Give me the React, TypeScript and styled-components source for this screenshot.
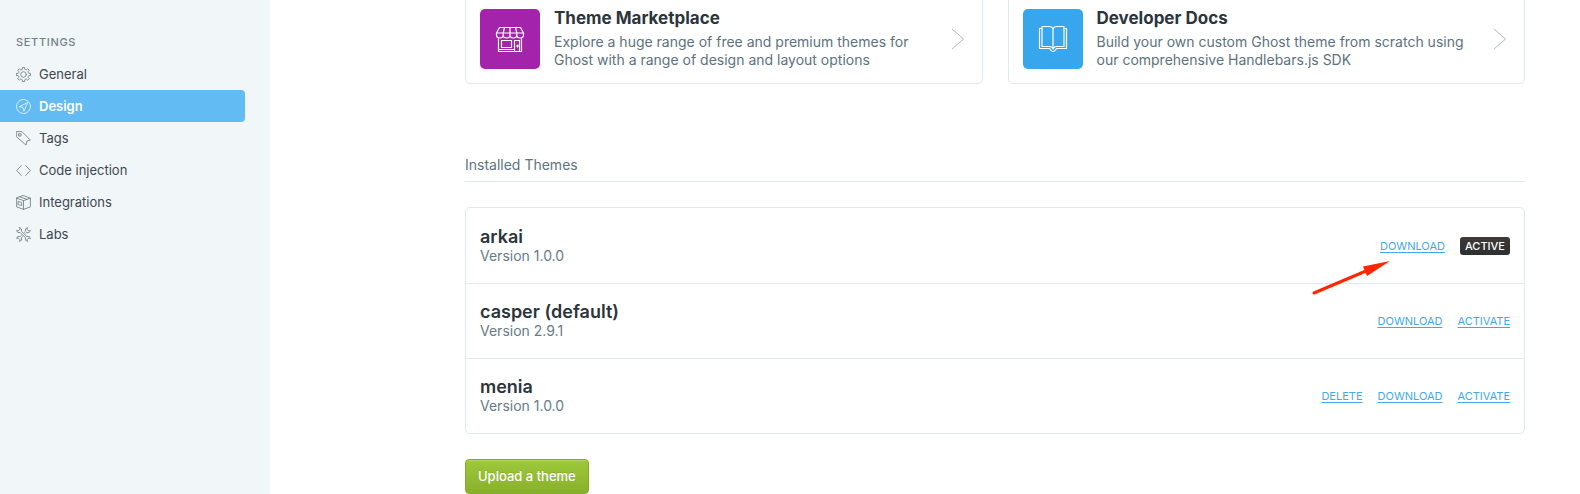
import React from "react";
import styled, { createGlobalStyle, css } from "styled-components";

const GlobalStyle = createGlobalStyle`
  * { box-sizing: border-box; }
  html, body { margin: 0; background: #fff; overflow: hidden; }
  body {
    font-family: Inter, "Liberation Sans", sans-serif;
    font-size: 14px;
    color: #15212a;
    -webkit-font-smoothing: antialiased;
  }
  h1, h2, h3, p, ul { margin: 0; padding: 0; }
  ul { list-style: none; }
`;

const Page = styled.div`
  display: grid;
  grid-template-columns: 270px minmax(0, 1fr);
  height: 100vh;
  overflow: hidden;
`;

const Sidebar = styled.nav`
  padding-top: 34px;
  background: #f1f6f9;
`;

const NavLink = styled.a<{ $active?: boolean }>`
  display: flex;
  align-items: center;
  gap: 8px;
  height: 32px;
  margin-right: 25px;
  padding-left: 16px;
  border-radius: 0 4px 4px 0;
  font-size: 13px;
  line-height: 16px;
  color: #3e484f;
  text-decoration: none;
  svg { color: #757f84; }
  ${(p) =>
    p.$active &&
    css`
      background: #63bbf3;
      color: #fff;
      font-weight: 600;
      svg { color: #e6f5ff; }
    `}
`;

const NavHeading = styled.h2`
  margin-bottom: 8px;
  padding-left: 16px;
  font-size: 11px;
  line-height: 16px;
  font-weight: 500;
  letter-spacing: 0.06em;
  text-transform: uppercase;
  color: #738088;
`;

const NavIcon = styled.svg`
  flex: none;
  width: 15px;
  height: 15px;
  fill: none;
  stroke: currentColor;
  stroke-width: 1.4;
  stroke-linejoin: round;
  stroke-linecap: round;
`;

const Main = styled.main`
  padding: 0 55px 0 195px;
  margin-top: -6px;
`;

const Cards = styled.section`
  display: grid;
  grid-template-columns: 1fr 1fr;
  gap: 25px;
`;

const Card = styled.a`
  display: flex;
  align-items: center;
  padding: 14px;
  border: 1px solid #dfe9f0;
  border-radius: 5px;
  text-decoration: none;
`;

const Tile = styled.span<{ $color: string }>`
  display: flex;
  flex: none;
  align-items: center;
  justify-content: center;
  width: 60px;
  height: 60px;
  border-radius: 5px;
  background: ${(p) => p.$color};
`;

const TileIcon = styled.svg`
  width: 30px;
  height: 30px;
  fill: none;
  stroke: #fff;
  stroke-width: 1.2;
  stroke-linejoin: round;
  stroke-linecap: round;
`;

const CardText = styled.div`
  flex: 1;
  margin-left: 14px;
`;

const CardTitle = styled.h3`
  margin-bottom: 6px;
  font-size: 17px;
  line-height: 18px;
  font-weight: 700;
  color: #2b353b;
`;

const CardCopy = styled.p`
  max-width: 380px;
  font-size: 14px;
  line-height: 18px;
  color: #5d727e;
`;

const Chevron = styled.svg`
  flex: none;
  width: 14px;
  height: 22px;
  margin-right: 3px;
  fill: none;
  stroke: #b0bac0;
`;

const SectionTitle = styled.h2`
  margin: 71px 0 25px;
  padding-bottom: 7px;
  border-bottom: 1px solid #dfe9f0;
  font-size: 14px;
  line-height: 19px;
  font-weight: 400;
  color: #5d7480;
`;

const ThemeList = styled.ul`
  border: 1px solid #dfe9f0;
  border-radius: 5px;
`;

const ThemeRow = styled.li`
  display: flex;
  align-items: center;
  justify-content: space-between;
  height: 75px;
  padding: 0 14px;
  & + & { border-top: 1px solid #dfe9f0; }
`;

const ThemeName = styled.h3`
  font-size: 18px;
  line-height: 20px;
  font-weight: 600;
  color: #2b353b;
`;

const ThemeVersion = styled.p`
  font-size: 14px;
  line-height: 18px;
  color: #667c87;
`;

const Actions = styled.div`
  display: flex;
  align-items: center;
  gap: 15px;
`;

const ActionLink = styled.a`
  font-size: 11px;
  line-height: 18px;
  text-transform: uppercase;
  text-decoration: underline;
  text-underline-offset: 2px;
  color: #3fa9ea;
`;

const ActiveBadge = styled.span`
  padding: 0 5px;
  border-radius: 3px;
  background: linear-gradient(#3f3a38, #2d2f31);
  font-size: 11px;
  line-height: 18px;
  font-weight: 500;
  text-transform: uppercase;
  color: #fff;
`;

const UploadButton = styled.button`
  display: block;
  height: 35px;
  margin-top: 25px;
  padding: 0 12px 2px;
  border: 1px solid #86ab2c;
  border-radius: 4px;
  background: linear-gradient(#9fc93a, #88b02b);
  box-shadow: inset 0 1px 0 rgba(255, 255, 255, 0.2);
  font-family: inherit;
  font-size: 13px;
  font-weight: 500;
  color: #fff;
  text-shadow: 0 -1px 0 rgba(0, 0, 0, 0.1);
`;

const Pointer = styled.svg`
  position: absolute;
  top: 260px;
  right: 190px;
  width: 78px;
  height: 36px;
  pointer-events: none;
`;

const gearPath = Array.from({ length: 8 }, (_, i) => {
  const at = (deg: number, r: number) => {
    const a = ((i * 45 + deg) * Math.PI) / 180;
    return `${(12 + r * Math.sin(a)).toFixed(2)} ${(12 - r * Math.cos(a)).toFixed(2)}`;
  };
  return `${i ? "L" : "M"}${at(-13, 8.6)}L${at(-9, 11.4)}L${at(9, 11.4)}L${at(13, 8.6)}L${at(22.5, 8.3)}`;
}).join("") + "Z";

const navIcons = {
  general: (
    <>
      <path d={gearPath} />
      <circle cx="12" cy="12" r="4.5" />
    </>
  ),
  design: (
    <>
      <circle cx="12" cy="12" r="11.2" />
      <path d="M18 6 5 12.500l6 .8 1.500 5.700Z" />
    </>
  ),
  tags: (
    <>
      <path d="M1 1h8.500L23 14.500l-5.500 1.500L16 22.500 1 9.500Z" />
      <rect x="4.5" y="4.5" width="3.5" height="3.5" />
    </>
  ),
  code: <path d="M8.500 4 1 12l7.500 8M15.500 4 23 12l-7.500 8" />,
  integrations: (
    <>
      <path d="m12 1 11 4v14l-11 4-11-4V5ZM1 5l11 4 11-4M12 9v14M6.500 3l11 4" />
      <path d="M4 10.500l5 1.500v5L4 15.500Z" />
    </>
  ),
  labs: (
    <>
      <path d="M5.500 1C8.500 1.500 9.500 4 8.800 6.800l8.400 8.400C20 14.500 22.500 15.500 23 18.500L20.500 17.500 17.500 20.500 18.500 23C15.500 22.500 14.500 20 15.200 17.200L6.800 8.800C4 9.500 1.500 8.500 1 5.500L3.500 6.500 6.500 3.500Z" />
      <path d="m13.500 8.500 1.700-1.700C14.500 4 15.500 1.500 18.500 1L17.500 3.500 20.500 6.500 23 5.500C22.500 8.500 20 9.500 17.200 8.800L15.500 10.500M10.500 15.500 8.800 17.200C9.500 20 8.500 22.500 5.500 23L6.500 20.500 3.500 17.500 1 18.500C1.500 15.500 4 14.500 6.800 15.200L8.500 13.500" />
    </>
  ),
};

const settings: { id: keyof typeof navIcons; label: string }[] = [
  { id: "general", label: "General" },
  { id: "design", label: "Design" },
  { id: "tags", label: "Tags" },
  { id: "code", label: "Code injection" },
  { id: "integrations", label: "Integrations" },
  { id: "labs", label: "Labs" },
];

const themes = [
  { name: "arkai", version: "1.0.0", actions: ["Download"], active: true },
  { name: "casper (default)", version: "2.9.1", actions: ["Download", "Activate"] },
  { name: "menia", version: "1.0.0", actions: ["Delete", "Download", "Activate"] },
];

const resources = [
  {
    title: "Theme Marketplace",
    copy: "Explore a huge range of free and premium themes for Ghost with a range of design and layout options",
    color: "#a324ab",
    icon: (
      <>
        <path d="M4.500 3.500h21L28.500 9h-27ZM9.500 3.500 8.200 9M15 3.500V9M20.500 3.500 21.800 9" />
        <path d="M1.500 9v2a3.350 3 0 0 0 6.700 0V9M8.200 11a3.400 3 0 0 0 6.800 0V9M15 11a3.400 3 0 0 0 6.800 0V9M21.800 11a3.350 3 0 0 0 6.700 0V9" />
        <path d="M3.500 14.500v13h23v-13M6.500 16.500h10v7h-10ZM19.500 27.500v-11h5v11M3.500 25.500h16M21.500 22h2M22.500 21v2" />
      </>
    ),
  },
  {
    title: "Developer Docs",
    copy: "Build your own custom Ghost theme from scratch using our comprehensive Handlebars.js SDK",
    color: "#37a6ec",
    icon: (
      <>
        <path d="M15 5C14.500 3 13 2.500 11 2.500H4v20h7c2 0 3.500.5 4 2.500.5-2 2-2.500 4-2.500h7v-20h-7c-2 0-3.500.5-4 2.500Zm0 0v20" />
        <path d="M4 4.500H1.500v20H11c1.500 0 1.500 3 4 3s2.500-3 4-3h9.500v-20H26" />
      </>
    ),
  },
];

export default function App() {
  return (
    <Page>
      <GlobalStyle />
      <Sidebar aria-label="Settings">
        <NavHeading>Settings</NavHeading>
        <ul>
          {settings.map(({ id, label }) => (
            <li key={id}>
              <NavLink href={`#${id}`} $active={id === "design"}>
                <NavIcon viewBox="0 0 24 24" aria-hidden="true">{navIcons[id]}</NavIcon>
                {label}
              </NavLink>
            </li>
          ))}
        </ul>
      </Sidebar>
      <Main>
        <Cards>
          {resources.map((r) => (
            <Card key={r.title} href="#">
              <Tile $color={r.color}>
                <TileIcon viewBox="0 0 30 30" aria-hidden="true">{r.icon}</TileIcon>
              </Tile>
              <CardText>
                <CardTitle>{r.title}</CardTitle>
                <CardCopy>{r.copy}</CardCopy>
              </CardText>
              <Chevron viewBox="0 0 14 22" aria-hidden="true">
                <path d="M1 1l11.500 10L1 21" />
              </Chevron>
            </Card>
          ))}
        </Cards>
        <SectionTitle>Installed Themes</SectionTitle>
        <ThemeList>
          {themes.map((t) => (
            <ThemeRow key={t.name}>
              <div>
                <ThemeName>{t.name}</ThemeName>
                <ThemeVersion>Version {t.version}</ThemeVersion>
              </div>
              <Actions>
                {t.actions.map((a) => (
                  <ActionLink key={a} href="#">{a}</ActionLink>
                ))}
                {t.active && <ActiveBadge>Active</ActiveBadge>}
              </Actions>
            </ThemeRow>
          ))}
        </ThemeList>
        <UploadButton type="button">Upload a theme</UploadButton>
      </Main>
      <Pointer viewBox="0 0 78 36" aria-hidden="true">
        <path d="M2 33 54 11" stroke="#ff2600" strokeWidth="3" strokeLinecap="round" />
        <path d="M78 1 51 6.500l4 9.500Z" fill="#ff2600" />
      </Pointer>
    </Page>
  );
}
